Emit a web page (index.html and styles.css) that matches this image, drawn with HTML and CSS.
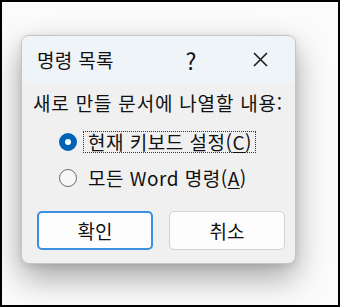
FILE: index.html
```html
<!DOCTYPE html>
<html lang="ko">
<head>
    <meta charset="UTF-8">
    <title>명령 목록</title>
    <link rel="stylesheet" href="styles.css">
</head>

<body>
    <!--바깥 캡처 틀-->
    <div class="frame">
        <div class="dialog">
            <!--제목줄-->
            <div class="titlebar">
                <span class="title">명령 목록</span>
                <span class="tbtn help">?</span>
                <span class="tbtn close">
                    <svg width="15" height="15" viewBox="0 0 15 15">
                        <path d="M1 1 L14 14 M14 1 L1 14" stroke="#1b1b1b" stroke-width="1.6" fill="none"/>
                    </svg>
                </span>
            </div>

            <!--본문-->
            <div class="content">
                <p class="prompt">새로 만들 문서에 나열할 내용:</p>
                <ul class="options">
                    <li class="opt">
                        <span class="radio on"></span>
                        <span class="label focus">현재 키보드 설정(<u>C</u>)</span>
                    </li>
                    <li class="opt">
                        <span class="radio"></span>
                        <span class="label">모든 Word 명령(<u>A</u>)</span>
                    </li>
                </ul>
                <div class="buttons">
                    <button class="btn primary">확인</button>
                    <button class="btn">취소</button>
                </div>
            </div>
        </div>
    </div>
</body>
</html>
```

FILE: styles.css
```css
html,
body {
    margin: 0;
    padding: 0;
}

body {
    font-family: "Noto Sans CJK KR", "Noto Sans", sans-serif;
    color: #111;
}

/*캡처 틀*/
.frame {
    box-sizing: border-box;
    width: 340px;
    height: 307px;
    border: 2px solid #000;
    background: #fbfbfb;
    padding: 33px 0 0 19px;
    overflow: hidden;
}

/*대화상자*/
.dialog {
    box-sizing: border-box;
    width: 275px;
    height: 229px;
    border: 1px solid #c4c4c4;
    border-radius: 8px;
    background: #f0f0f0;
    overflow: hidden;
    box-shadow: 0 14px 32px rgba(0, 0, 0, 0.34), 0 2px 8px rgba(0, 0, 0, 0.1);
}

.titlebar {
    display: flex;
    align-items: center;
    height: 47px;
    padding: 0 12px 0 15px;
    background: #eff4f9;
}

.title {
    flex: 1;
    font-size: 19px;
    line-height: 22px;
    letter-spacing: 0.3px;
}

.tbtn {
    display: flex;
    align-items: center;
    justify-content: center;
    width: 46px;
    height: 30px;
    font-size: 23px;
}

.help {
    margin-right: 23px;
}

.content {
    padding: 9px 0 0 11px;
}

.prompt {
    margin: 0;
    font-size: 19px;
    line-height: 22px;
    letter-spacing: 0.8px;
}

.options {
    list-style: none;
    margin: 17px 0 0;
    padding: 0 0 0 26px;
}

.opt {
    display: flex;
    align-items: center;
    height: 22px;
    margin-bottom: 14px;
}

/*라디오 버튼*/
.radio {
    box-sizing: border-box;
    width: 18px;
    height: 18px;
    border: 1.5px solid #6e6e6e;
    border-radius: 50%;
    background: #f7f7f7;
    margin-right: 6px;
}

.radio.on {
    border: 6px solid #0063b8;
    background: #fff;
}

.label {
    box-sizing: border-box;
    height: 22px;
    padding: 0 3px 0 4px;
    font-size: 19px;
    line-height: 20px;
    letter-spacing: 0.5px;
    border: 1px solid transparent;
}

.label.focus {
    border: 1px dotted #333;
}

u {
    text-underline-offset: 2px;
}

/*버튼*/
.buttons {
    display: flex;
    gap: 16px;
    margin-top: 22px;
    padding-left: 4px;
}

.btn {
    box-sizing: border-box;
    width: 116px;
    height: 39px;
    border: 1px solid #d2d2d2;
    border-radius: 5px;
    background: #fdfdfd;
    font-family: inherit;
    font-size: 19px;
    color: #111;
    padding: 0;
}

.btn.primary {
    border: 2px solid #3a8fe0;
}
```
